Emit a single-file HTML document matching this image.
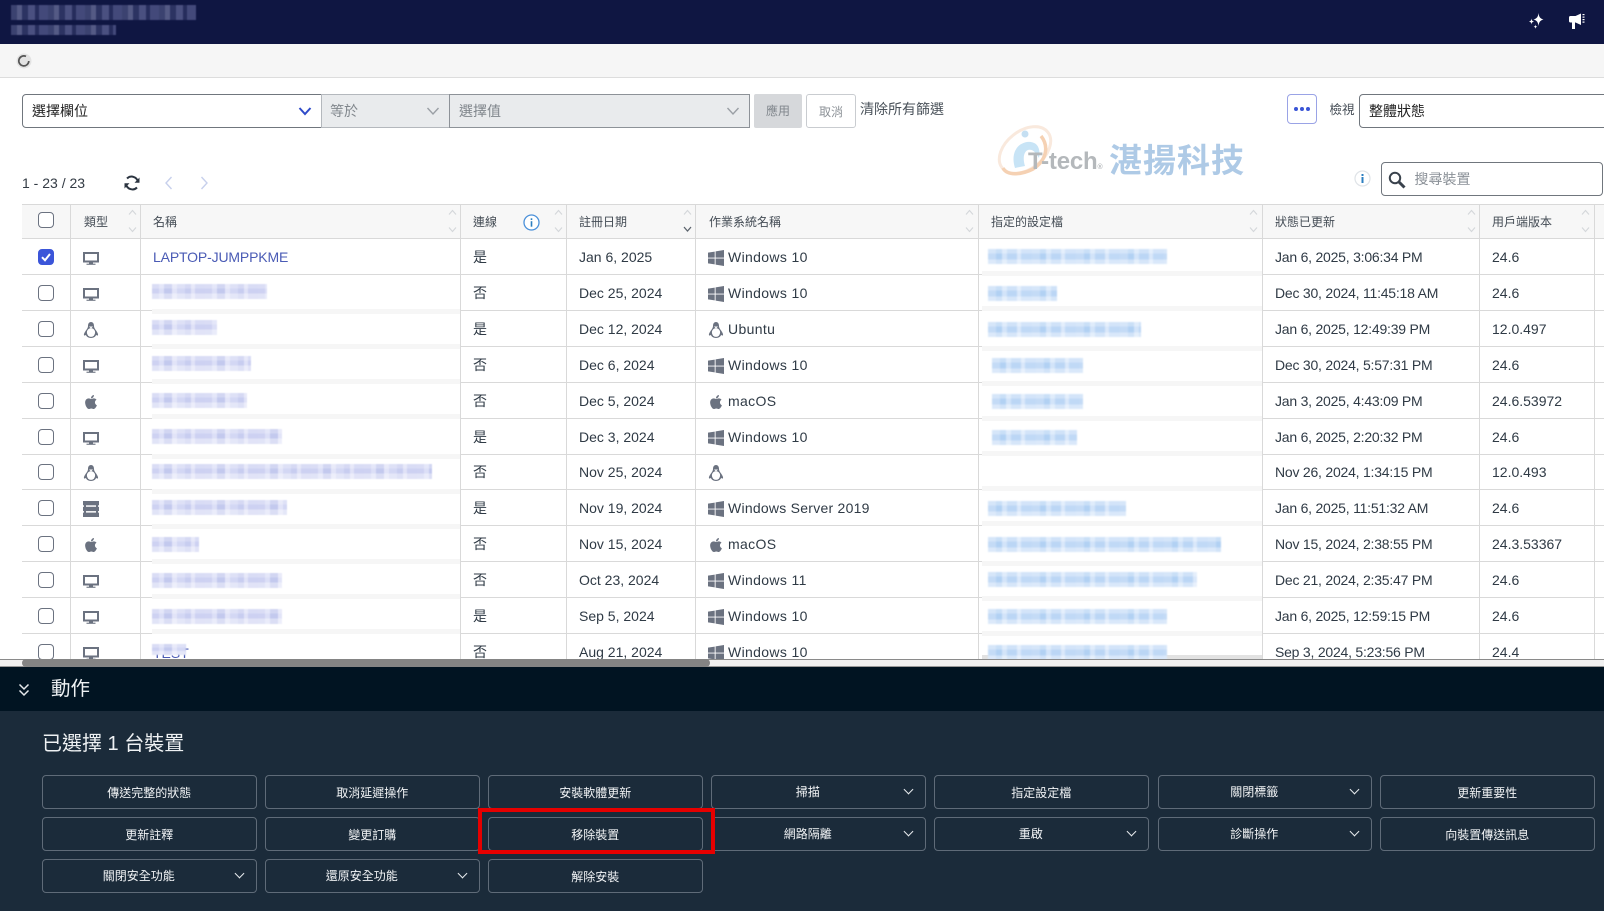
<!DOCTYPE html>
<html lang="zh-Hant"><head><meta charset="utf-8"><title>裝置</title>
<style>
html,body{margin:0;padding:0;width:1604px;height:911px;overflow:hidden;background:#fff}
body{position:relative;font-family:"Liberation Sans","Noto Sans CJK TC",sans-serif;font-size:14px;color:#2f3a45}
.a,.a2{position:absolute}
.hdr{left:0;top:0;width:1604px;height:44px;background:#0f1642}
.tb{left:0;top:44px;width:1604px;height:33px;background:#f6f6f6;border-bottom:1px solid #ddd;box-sizing:content-box}
.hb{background:repeating-linear-gradient(90deg,#3b4270 0 6px,#545a85 6px 11px,#2c3362 11px 17px,#4a5080 17px 24px,#262d5c 24px 28px,#43497a 28px 37px);filter:blur(.5px)}
.fld{top:94px;height:34px;box-sizing:border-box;border:1px solid #70767d;line-height:32px;padding-left:9px}
.gy{background:#e9ebed;color:#80868c;border-color:#b4b8bd}
.tx{line-height:20px;white-space:nowrap}
.vl{top:204px;height:455px;width:1px;background:#d9d9d9}
.hl{left:22px;width:1582px;height:1px;background:#d9d9d9}
.th{top:212px;line-height:20px;font-size:12px;color:#444c55;white-space:nowrap}
.cb{left:38px;width:16px;height:16px;box-sizing:border-box;border:1.5px solid #6b7280;border-radius:4px;background:#fff}
.ic{left:83px;width:16px;height:16px;fill:#6b7280}
.oi{left:708px;width:16px;height:16px;fill:#6b7280}
.td{line-height:20px;white-space:nowrap;color:#2f3a45}
.st{letter-spacing:-.22px}
.os{letter-spacing:.35px}
.n{left:152px;height:15px;background:linear-gradient(180deg,rgba(255,255,255,.25) 0 30%,rgba(255,255,255,0) 30% 65%,rgba(255,255,255,.4) 65%),repeating-linear-gradient(90deg,#ced2f2 0 7px,#dcdff7 7px 12px,#c3c9ee 12px 20px,#e2e4f8 20px 25px,#d3d7f4 25px 33px,#c8cdf0 33px 39px,#e0e2f7 39px 43px,#cdd1f2 43px 53px);filter:blur(.6px)}
.p{height:15px;background:linear-gradient(180deg,rgba(255,255,255,.3) 0 30%,rgba(255,255,255,0) 30% 70%,rgba(255,255,255,.4) 70%),repeating-linear-gradient(90deg,#c4dbf6 0 8px,#b2d1f3 8px 14px,#d3e4f9 14px 19px,#bbd6f5 19px 29px,#dae8fa 29px 33px,#c0d9f6 33px 44px);filter:blur(.7px)}
.bd{height:5px;background:#f6f6f6}
.bn{left:152px;width:308px}
.bp{left:982px;width:280px}
.chv{position:absolute}
.act{left:0;top:667px;width:1604px;height:44px;background:#011422}
.pan{left:0;top:711px;width:1604px;height:200px;background:#1b2b3a}
.b{position:absolute;width:214.500px;height:34px;box-sizing:border-box;border:1px solid #5f6b78;border-radius:4px;color:#f2f4f6;font-size:12px;line-height:32px;padding-top:1px;text-align:center;white-space:nowrap}
.dd{padding-right:21px;padding-top:0}
.dd:after{content:"";position:absolute;right:13px;top:10px;width:7px;height:7px;box-sizing:border-box;border-right:1.5px solid #e8ebee;border-bottom:1.5px solid #e8ebee;transform:rotate(45deg)}
.y1{top:775px}.y2{top:817px}.y3{top:859px}
.x1{left:42px}.x2{left:265px}.x3{left:488px}.x4{left:711px}.x5{left:934px}.x6{left:1157.500px}.x7{left:1380px}
</style></head><body>
<svg width="0" height="0" style="position:absolute">
<symbol id="mon" viewBox="0 0 16 16"><path fill-rule="evenodd" d="M0 2h16v10.500H0z M2 4v6.500h12V4z"/><rect x="6" y="12.500" width="4" height="1.500"/><rect x="3.500" y="13.700" width="9" height="1.100"/></symbol>
<symbol id="win" viewBox="0 0 16 16"><path d="M0 2.600L6.700 1.600V7.600H0Z M7.600 1.400L16 0V7.600H7.600Z M0 8.500H6.700V14.400L0 13.400Z M7.600 8.500H16V16L7.600 14.600Z"/></symbol>
<symbol id="tux" viewBox="0 0 16 16"><path d="M8 0C5.800 0 5 2 5 4c0 1.500-.6 2.500-2 4.400C1.800 10.200.6 12 1 13.200c.3.600 1.200.3 1.800-.3C3.600 14.800 5.500 16 8 16s4.400-1.200 5.200-3.100c.6.600 1.500.9 1.800.3.400-1.200-.8-3-2-4.800C11.600 6.500 11 5.500 11 4c0-2-.8-4-3-4z"/><ellipse cx="8" cy="10.500" rx="4.100" ry="4.400" fill="#fff"/><path d="M6 4.500h4L8 6.500z" fill="#fff"/></symbol>
<symbol id="apl" viewBox="0 0 384 512"><path d="M318.700 268.700c-.2-36.700 16.400-64.400 50-84.800-18.800-26.900-47.200-41.700-84.700-44.600-35.500-2.800-74.300 20.700-88.500 20.700-15 0-49.400-19.700-76.400-19.700C63.300 141.200 4 184.800 4 273.500q0 39.300 14.400 81.200c12.800 36.700 59 126.700 107.200 125.200 25.200-.6 43-17.900 75.800-17.900 31.800 0 48.300 17.900 76.400 17.900 48.600-.7 90.400-82.500 102.600-119.300-65.200-30.700-61.700-90-61.700-91.900zm-56.600-164.200c27.300-32.400 24.800-61.900 24-72.500-24.100 1.400-52 16.400-67.900 34.900-17.500 19.800-27.800 44.300-25.600 71.900 26.100 2 49.900-11.400 69.500-34.300z"/></symbol>
<symbol id="srv" viewBox="0 0 16 16"><rect y="0" width="16" height="4.300"/><rect y="5.800" width="16" height="4.300"/><rect y="11.600" width="16" height="4.400"/><rect x="1" y="4" width="2" height="2"/><rect x="13" y="4" width="2" height="2"/><rect x="1" y="10" width="2" height="2"/><rect x="13" y="10" width="2" height="2"/></symbol>
<symbol id="sa" viewBox="0 0 9 24"><path d="M1 5.500L4.500 1.500L8 5.500M1 18.500L4.500 22.500L8 18.500" fill="none" stroke="#d4d7da" stroke-width="1.100"/></symbol>
</svg>

<div class="a hdr"></div>
<div class="a hb" style="left:11px;top:5px;width:185px;height:15px"></div>
<div class="a hb" style="left:11px;top:25px;width:105px;height:10px"></div>
<svg class="a" style="left:1528px;top:12px" width="18" height="18" viewBox="0 0 18 18" fill="#fff"><path d="M10.500 1C11 5 12 6.500 15.500 7.500 12 8.500 11 10 10.500 14 10 10 9 8.500 5.500 7.500 9 6.500 10 5 10.500 1z"/><path d="M3.500 6.500C3.800 8.500 4.300 9 6 9.500 4.300 10 3.800 10.500 3.500 12.500 3.200 10.500 2.700 10 1 9.500 2.700 9 3.200 8.500 3.500 6.500z"/><path d="M7.500 12.500C7.700 14 8 14.300 9.300 14.700 8 15 7.700 15.400 7.500 17 7.300 15.400 7 15 5.700 14.700 7 14.300 7.300 14 7.500 12.500z"/></svg>
<svg class="a" style="left:1569px;top:13px" width="17" height="17" viewBox="0 0 17 17" fill="#fff"><path d="M0 4.500Q0 3 1.500 3H6.500L12 .500V12L6.500 9.500H6V16H3V9.500H1.500Q0 9.500 0 8z"/><rect x="13.500" y="1" width="2" height="1.200"/><rect x="13.500" y="3.500" width="2" height="1.200"/><rect x="13.500" y="6" width="2" height="1.200"/><rect x="13.500" y="8.500" width="2" height="1.200"/></svg>

<div class="a tb"></div>
<svg class="a" style="left:16px;top:53px" width="16" height="16" viewBox="0 0 16 16"><circle cx="8" cy="8" r="7.500" fill="#e3e3e3"/><path d="M10 3.400A5 5 0 1 0 12.800 8" fill="none" stroke="#555" stroke-width="1.700"/></svg>

<div class="a fld" style="left:22px;width:300px;background:#fff;border-radius:4px 0 0 4px;color:#222">選擇欄位</div>
<svg class="chv" style="left:298px;top:106px" width="14" height="10" viewBox="0 0 14 10"><path d="M1.500 2L7 8L12.500 2" fill="none" stroke="#2f4bc9" stroke-width="2"/></svg>
<div class="a fld gy" style="left:321px;width:130px;padding-left:8px">等於</div>
<svg class="chv" style="left:426px;top:106px" width="14" height="10" viewBox="0 0 14 10"><path d="M1.500 2L7 8L12.500 2" fill="none" stroke="#9a9fa5" stroke-width="1.400"/></svg>
<div class="a fld gy" style="left:449px;width:301px;border-color:#8d9298">選擇值</div>
<svg class="chv" style="left:726px;top:106px" width="14" height="10" viewBox="0 0 14 10"><path d="M1.500 2L7 8L12.500 2" fill="none" stroke="#9a9fa5" stroke-width="1.400"/></svg>
<div class="a" style="left:754px;top:94px;width:48px;height:34px;background:#d6d8db;border-radius:2px;color:#80868c;font-size:12px;line-height:34px;text-align:center">應用</div>
<div class="a" style="left:806px;top:94px;width:50px;height:34px;box-sizing:border-box;border:1px solid #c9ccd0;border-radius:3px;color:#8c9197;font-size:12px;line-height:34px;text-align:center">取消</div>
<div class="a tx" style="left:860px;top:99px;color:#4a525a">清除所有篩選</div>
<div class="a" style="left:1287px;top:94px;width:30px;height:30px;box-sizing:border-box;border:1px solid #9aa3e6;border-radius:4px"></div>
<svg class="a" style="left:1292px;top:104px" width="20" height="10"><circle cx="4" cy="5" r="2" fill="#3a55d6"/><circle cx="10" cy="5" r="2" fill="#3a55d6"/><circle cx="16" cy="5" r="2" fill="#3a55d6"/></svg>
<div class="a tx" style="left:1329.500px;top:100px;font-size:12.500px;color:#444c55">檢視</div>
<div class="a fld" style="left:1359px;width:270px;background:#fff;border-radius:4px;color:#222">整體狀態</div>

<!-- watermark -->
<svg class="a" style="left:995px;top:122px;opacity:.85" width="62" height="56" viewBox="0 0 62 56"><ellipse cx="30" cy="28" rx="29" ry="19" transform="rotate(-38 30 28)" fill="none" stroke="#f8e6d8" stroke-width="3"/><path d="M46 14C54 24 52 38 38 47 26 53 12 54 8 46" fill="none" stroke="#f4c9a6" stroke-width="3.500"/><path d="M20 46C16 34 20 22 32 20 42 19 46 26 44 36 40 30 38 27 33 28 28 30 28 38 30 44z" fill="#bfe0f5"/><circle cx="30" cy="12" r="3.500" fill="#bcdaf0"/></svg>
<div class="a" style="left:1028px;top:148px;font:bold 24px/28px 'Liberation Sans',sans-serif;color:#b4b8bb;letter-spacing:-.2px;white-space:nowrap">T-tech<span style="font-size:7px">®</span></div>
<div class="a" style="left:1109px;top:137px;font:bold 33px/42px 'Noto Sans CJK TC',sans-serif;color:#aecae6;letter-spacing:1px;white-space:nowrap">湛揚科技</div>

<div class="a tx" style="left:22px;top:173px;color:#333b44">1 - 23 / 23</div>
<svg class="a" style="left:123px;top:174px" width="18" height="18" viewBox="0 0 18 18" fill="none" stroke="#2b3440" stroke-width="2"><path d="M15 8A6.500 6.500 0 0 0 4 4.500"/><path d="M3 10A6.500 6.500 0 0 0 14 13.500"/><path d="M16.500 3.500V8.800H11.500Z M1.500 14.500V9.200H6.500Z" fill="#2b3440" stroke="none"/></svg>
<svg class="a" style="left:163px;top:175px" width="12" height="16" viewBox="0 0 12 16"><path d="M8.500 2L3 8L8.500 14" fill="none" stroke="#c7d0ec" stroke-width="1.400"/></svg>
<svg class="a" style="left:198px;top:175px" width="12" height="16" viewBox="0 0 12 16"><path d="M3.500 2L9 8L3.500 14" fill="none" stroke="#c7d0ec" stroke-width="1.400"/></svg>
<svg class="a" style="left:1353.500px;top:170px" width="17" height="17" viewBox="0 0 17 17"><circle cx="8.500" cy="8.500" r="7.500" fill="#fff" stroke="#dfe3e7" stroke-width="1.200"/><rect x="7.500" y="7" width="2" height="6" fill="#2c7fc0"/><rect x="7.500" y="4" width="2" height="2" fill="#2c7fc0"/></svg>
<div class="a fld" style="left:1380.500px;top:162px;width:222px;background:#fff;border-radius:4px;color:#8a9097;padding-left:33px">搜尋裝置</div>
<svg class="a" style="left:1388px;top:171px" width="18" height="18" viewBox="0 0 18 18" fill="none" stroke="#39424c"><circle cx="7" cy="7" r="5.200" stroke-width="2"/><path d="M11 11L16.500 16.500" stroke-width="3"/></svg>

<!-- table -->
<div class="a" style="left:0;top:0;width:1604px;height:659px;overflow:hidden">
<div class="a" style="left:22px;top:204px;width:1582px;height:34px;background:#f7f7f7"></div>
<div class="a hl" style="top:204px"></div>
<div class="a hl" style="top:238px"></div><div class="a hl" style="top:274px"></div><div class="a hl" style="top:310px"></div><div class="a hl" style="top:346px"></div><div class="a hl" style="top:382px"></div><div class="a hl" style="top:418px"></div><div class="a hl" style="top:454px"></div><div class="a hl" style="top:489px"></div><div class="a hl" style="top:525px"></div><div class="a hl" style="top:561px"></div><div class="a hl" style="top:597px"></div><div class="a hl" style="top:633px"></div>
<div class="a vl" style="left:70px"></div><div class="a vl" style="left:140px"></div><div class="a vl" style="left:460px"></div><div class="a vl" style="left:566px"></div><div class="a vl" style="left:695px"></div><div class="a vl" style="left:978px"></div><div class="a vl" style="left:1262px"></div><div class="a vl" style="left:1479px"></div><div class="a vl" style="left:1594px"></div>

<div class="a bd bn" style="top:309px"></div><div class="a bd bn" style="top:344px"></div><div class="a bd bn" style="top:379px"></div><div class="a bd bn" style="top:414px"></div><div class="a bd bn" style="top:454px"></div><div class="a bd bn" style="top:489px"></div><div class="a bd bn" style="top:524px"></div><div class="a bd bn" style="top:559px"></div><div class="a bd bn" style="top:594px"></div><div class="a bd bn" style="top:629px"></div>
<div class="a bd bp" style="top:271px"></div><div class="a bd bp" style="top:306px"></div><div class="a bd bp" style="top:346px"></div><div class="a bd bp" style="top:381px"></div><div class="a bd bp" style="top:416px"></div><div class="a bd bp" style="top:451px"></div><div class="a bd bp" style="top:486px"></div><div class="a bd bp" style="top:521px"></div><div class="a bd bp" style="top:561px"></div><div class="a bd bp" style="top:596px"></div><div class="a bd bp" style="top:631px"></div><div class="a bd bp" style="top:655px;background:#e2e2e2"></div>

<div class="a cb" style="top:212px"></div>
<div class="a th" style="left:84px">類型</div><div class="a th" style="left:153px">名稱</div><div class="a th" style="left:473px">連線</div><div class="a th" style="left:579px">註冊日期</div><div class="a th" style="left:709px">作業系統名稱</div><div class="a th" style="left:991px">指定的設定檔</div><div class="a th" style="left:1275px">狀態已更新</div><div class="a th" style="left:1492px">用戶端版本</div>
<svg class="a" style="left:128px;top:209px" width="9" height="24"><use href="#sa"/></svg><svg class="a" style="left:448px;top:209px" width="9" height="24"><use href="#sa"/></svg><svg class="a" style="left:554px;top:209px" width="9" height="24"><use href="#sa"/></svg><svg class="a" style="left:683px;top:209px" width="9" height="24"><use href="#sa"/></svg><svg class="a" style="left:965px;top:209px" width="9" height="24"><use href="#sa"/></svg><svg class="a" style="left:1249px;top:209px" width="9" height="24"><use href="#sa"/></svg><svg class="a" style="left:1467px;top:209px" width="9" height="24"><use href="#sa"/></svg><svg class="a" style="left:1581px;top:209px" width="9" height="24"><use href="#sa"/></svg>
<svg class="a" style="left:683px;top:225px" width="9" height="8" viewBox="0 0 9 8"><path d="M1 2L4.500 6L8 2" fill="none" stroke="#5a626b" stroke-width="1.200"/></svg>
<svg class="a" style="left:523px;top:214px" width="17" height="17" viewBox="0 0 17 17"><circle cx="8.500" cy="8.500" r="7.500" fill="#fff" stroke="#4a90d9" stroke-width="1.300"/><rect x="7.700" y="7.200" width="1.600" height="5.500" fill="#2c7fc0"/><rect x="7.700" y="4.300" width="1.600" height="1.700" fill="#2c7fc0"/></svg>

<!-- row 1 -->
<div class="a cb" style="top:249px;background:#3b55d9;border-color:#3b55d9"></div>
<svg class="a" style="left:38px;top:249px" width="16" height="16" viewBox="0 0 16 16"><path d="M4 8.200L7 11.200L12 5" fill="none" stroke="#fff" stroke-width="2"/></svg>
<svg class="a ic" style="top:250px"><use href="#mon"/></svg>
<div class="a td" style="left:153px;top:247px;color:#4a5bb5;letter-spacing:-.15px">LAPTOP-JUMPPKME</div>
<div class="a td" style="left:473px;top:247px">是</div><div class="a td" style="left:579px;top:247px">Jan 6, 2025</div>
<svg class="a oi" style="top:250px"><use href="#win"/></svg><div class="a td os" style="left:728px;top:247px">Windows 10</div>
<div class="a p" style="left:988px;top:249px;width:179px"></div>
<div class="a td st" style="left:1275px;top:247px">Jan 6, 2025, 3:06:34 PM</div><div class="a td" style="left:1492px;top:247px">24.6</div>

<!-- row 2 -->
<div class="a cb" style="top:285px"></div>
<svg class="a ic" style="top:286px"><use href="#mon"/></svg>
<div class="a n" style="top:284px;width:115px"></div>
<div class="a td" style="left:473px;top:283px">否</div><div class="a td" style="left:579px;top:283px">Dec 25, 2024</div>
<svg class="a oi" style="top:286px"><use href="#win"/></svg><div class="a td os" style="left:728px;top:283px">Windows 10</div>
<div class="a p" style="left:988px;top:286px;width:69px"></div>
<div class="a td st" style="left:1275px;top:283px">Dec 30, 2024, 11:45:18 AM</div><div class="a td" style="left:1492px;top:283px">24.6</div>

<!-- row 3 -->
<div class="a cb" style="top:321px"></div>
<svg class="a ic" style="top:322px"><use href="#tux"/></svg>
<div class="a n" style="top:320px;width:65px"></div>
<div class="a td" style="left:473px;top:319px">是</div><div class="a td" style="left:579px;top:319px">Dec 12, 2024</div>
<svg class="a oi" style="top:322px"><use href="#tux"/></svg><div class="a td os" style="left:728px;top:319px">Ubuntu</div>
<div class="a p" style="left:988px;top:322px;width:153px"></div>
<div class="a td st" style="left:1275px;top:319px">Jan 6, 2025, 12:49:39 PM</div><div class="a td" style="left:1492px;top:319px">12.0.497</div>

<!-- row 4 -->
<div class="a cb" style="top:357px"></div>
<svg class="a ic" style="top:358px"><use href="#mon"/></svg>
<div class="a n" style="top:356px;width:99px"></div>
<div class="a td" style="left:473px;top:355px">否</div><div class="a td" style="left:579px;top:355px">Dec 6, 2024</div>
<svg class="a oi" style="top:358px"><use href="#win"/></svg><div class="a td os" style="left:728px;top:355px">Windows 10</div>
<div class="a p" style="left:992px;top:358px;width:91px"></div>
<div class="a td st" style="left:1275px;top:355px">Dec 30, 2024, 5:57:31 PM</div><div class="a td" style="left:1492px;top:355px">24.6</div>

<!-- row 5 -->
<div class="a cb" style="top:393px"></div>
<svg class="a ic" style="top:394px"><use href="#apl"/></svg>
<div class="a n" style="top:393px;width:95px"></div>
<div class="a td" style="left:473px;top:391px">否</div><div class="a td" style="left:579px;top:391px">Dec 5, 2024</div>
<svg class="a oi" style="top:394px"><use href="#apl"/></svg><div class="a td os" style="left:728px;top:391px">macOS</div>
<div class="a p" style="left:992px;top:394px;width:91px"></div>
<div class="a td st" style="left:1275px;top:391px">Jan 3, 2025, 4:43:09 PM</div><div class="a td" style="left:1492px;top:391px">24.6.53972</div>

<!-- row 6 -->
<div class="a cb" style="top:429px"></div>
<svg class="a ic" style="top:430px"><use href="#mon"/></svg>
<div class="a n" style="top:429px;width:130px"></div>
<div class="a td" style="left:473px;top:427px">是</div><div class="a td" style="left:579px;top:427px">Dec 3, 2024</div>
<svg class="a oi" style="top:430px"><use href="#win"/></svg><div class="a td os" style="left:728px;top:427px">Windows 10</div>
<div class="a p" style="left:992px;top:430px;width:85px"></div>
<div class="a td st" style="left:1275px;top:427px">Jan 6, 2025, 2:20:32 PM</div><div class="a td" style="left:1492px;top:427px">24.6</div>

<!-- row 7 -->
<div class="a cb" style="top:464px"></div>
<svg class="a ic" style="top:465px"><use href="#tux"/></svg>
<div class="a n" style="top:464px;width:280px"></div>
<div class="a td" style="left:473px;top:462px">否</div><div class="a td" style="left:579px;top:462px">Nov 25, 2024</div>
<svg class="a oi" style="top:465px"><use href="#tux"/></svg>
<div class="a td st" style="left:1275px;top:462px">Nov 26, 2024, 1:34:15 PM</div><div class="a td" style="left:1492px;top:462px">12.0.493</div>

<!-- row 8 -->
<div class="a cb" style="top:500px"></div>
<svg class="a ic" style="top:501px"><use href="#srv"/></svg>
<div class="a n" style="top:500px;width:135px"></div>
<div class="a td" style="left:473px;top:498px">是</div><div class="a td" style="left:579px;top:498px">Nov 19, 2024</div>
<svg class="a oi" style="top:501px"><use href="#win"/></svg><div class="a td os" style="left:728px;top:498px;letter-spacing:.25px">Windows Server 2019</div>
<div class="a p" style="left:988px;top:501px;width:138px"></div>
<div class="a td st" style="left:1275px;top:498px">Jan 6, 2025, 11:51:32 AM</div><div class="a td" style="left:1492px;top:498px">24.6</div>

<!-- row 9 -->
<div class="a cb" style="top:536px"></div>
<svg class="a ic" style="top:537px"><use href="#apl"/></svg>
<div class="a n" style="top:537px;width:47px"></div>
<div class="a td" style="left:473px;top:534px">否</div><div class="a td" style="left:579px;top:534px">Nov 15, 2024</div>
<svg class="a oi" style="top:537px"><use href="#apl"/></svg><div class="a td os" style="left:728px;top:534px">macOS</div>
<div class="a p" style="left:988px;top:537px;width:233px"></div>
<div class="a td st" style="left:1275px;top:534px">Nov 15, 2024, 2:38:55 PM</div><div class="a td" style="left:1492px;top:534px">24.3.53367</div>

<!-- row 10 -->
<div class="a cb" style="top:572px"></div>
<svg class="a ic" style="top:573px"><use href="#mon"/></svg>
<div class="a n" style="top:573px;width:130px"></div>
<div class="a td" style="left:473px;top:570px">否</div><div class="a td" style="left:579px;top:570px">Oct 23, 2024</div>
<svg class="a oi" style="top:573px"><use href="#win"/></svg><div class="a td os" style="left:728px;top:570px">Windows 11</div>
<div class="a p" style="left:988px;top:572px;width:209px"></div>
<div class="a td st" style="left:1275px;top:570px">Dec 21, 2024, 2:35:47 PM</div><div class="a td" style="left:1492px;top:570px">24.6</div>

<!-- row 11 -->
<div class="a cb" style="top:608px"></div>
<svg class="a ic" style="top:609px"><use href="#mon"/></svg>
<div class="a n" style="top:609px;width:130px"></div>
<div class="a td" style="left:473px;top:606px">是</div><div class="a td" style="left:579px;top:606px">Sep 5, 2024</div>
<svg class="a oi" style="top:609px"><use href="#win"/></svg><div class="a td os" style="left:728px;top:606px">Windows 10</div>
<div class="a p" style="left:988px;top:609px;width:179px"></div>
<div class="a td st" style="left:1275px;top:606px">Jan 6, 2025, 12:59:15 PM</div><div class="a td" style="left:1492px;top:606px">24.6</div>

<!-- row 12 -->
<div class="a cb" style="top:644px"></div>
<svg class="a ic" style="top:645px"><use href="#mon"/></svg>
<div class="a td" style="left:153px;top:643px;color:#4a5bb5">TEST</div>
<div class="a n" style="top:644px;width:34px;height:11px"></div>
<div class="a td" style="left:473px;top:642px">否</div><div class="a td" style="left:579px;top:642px">Aug 21, 2024</div>
<svg class="a oi" style="top:645px"><use href="#win"/></svg><div class="a td os" style="left:728px;top:642px">Windows 10</div>
<div class="a p" style="left:988px;top:645px;width:179px"></div>
<div class="a td st" style="left:1275px;top:642px">Sep 3, 2024, 5:23:56 PM</div><div class="a td" style="left:1492px;top:642px">24.4</div>
</div>

<!-- scrollbar -->
<div class="a" style="left:0;top:659px;width:1604px;height:8px;background:#f1f1f1;border-top:1px solid #8a8a8a;border-bottom:1px solid #9a9a9a;box-sizing:border-box"></div>
<div class="a" style="left:22px;top:659px;width:688px;height:8px;background:#848484;border-radius:4px"></div>

<!-- actions -->
<div class="a act"></div>
<svg class="a" style="left:18px;top:683px" width="12" height="14" viewBox="0 0 12 14"><path d="M1.500 1.500L6 6L10.500 1.500M1.500 7.500L6 12L10.500 7.500" fill="none" stroke="#e6e9ec" stroke-width="1.500"/></svg>
<div class="a" style="left:51px;top:675px;font-size:19.500px;line-height:28px;color:#eef1f3">動作</div>
<div class="a pan"></div>
<div class="a" style="left:42px;top:730px;font-size:20px;line-height:28px;color:#eef1f3;white-space:nowrap">已選擇 1 台裝置</div>

<div class="b y1 x1">傳送完整的狀態</div><div class="b y1 x2">取消延遲操作</div><div class="b y1 x3">安裝軟體更新</div><div class="b y1 x4 dd">掃描</div><div class="b y1 x5">指定設定檔</div><div class="b y1 x6 dd">關閉標籤</div><div class="b y1 x7">更新重要性</div>
<div class="b y2 x1">更新註釋</div><div class="b y2 x2">變更訂購</div><div class="b y2 x3">移除裝置</div><div class="b y2 x4 dd">網路隔離</div><div class="b y2 x5 dd">重啟</div><div class="b y2 x6 dd">診斷操作</div><div class="b y2 x7">向裝置傳送訊息</div>
<div class="b y3 x1 dd">關閉安全功能</div><div class="b y3 x2 dd">還原安全功能</div><div class="b y3 x3">解除安裝</div>

<div class="a" style="left:478px;top:808px;width:237px;height:46px;box-sizing:border-box;border:4px solid #e60000"></div>
</body></html>
